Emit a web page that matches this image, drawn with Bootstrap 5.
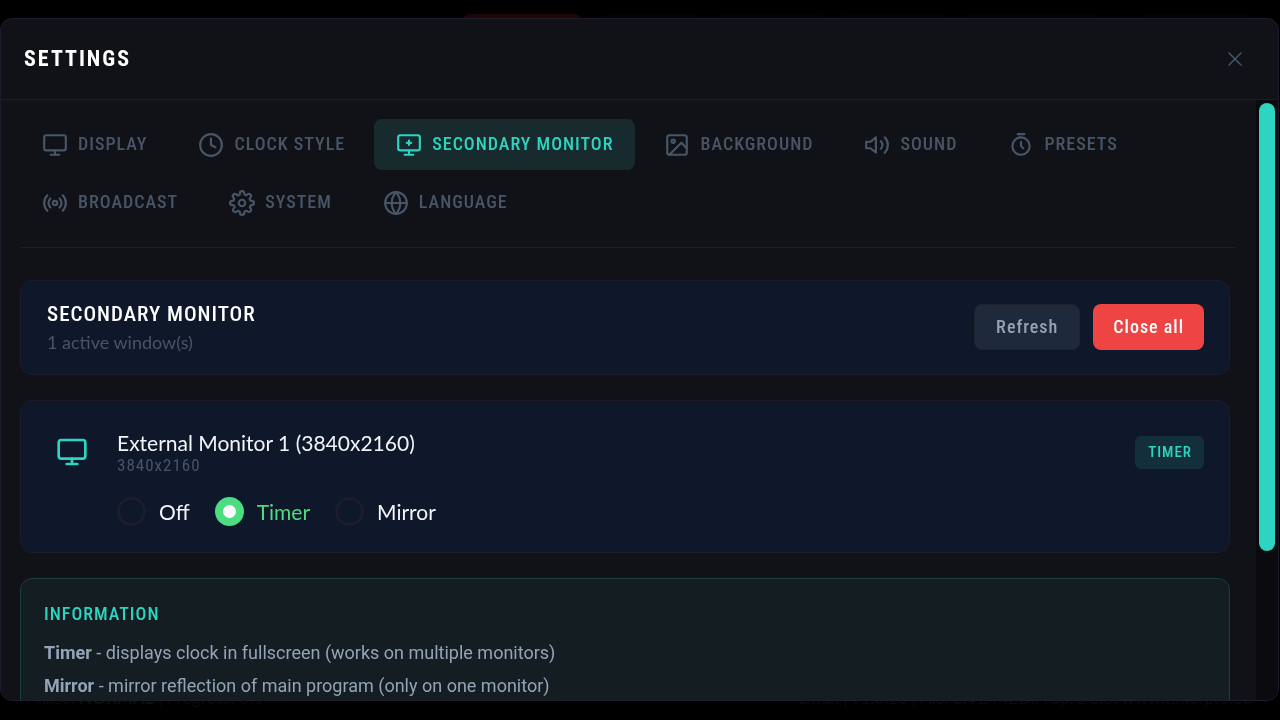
<!DOCTYPE html>
<html lang="en" data-bs-theme="dark">
<head>
<meta charset="utf-8">
<meta name="viewport" content="width=device-width, initial-scale=1">
<title>Settings</title>
<link href="https://cdn.jsdelivr.net/npm/bootstrap@5.3.0/dist/css/bootstrap.min.css" rel="stylesheet">
<style>
  :root {
    --teal: #2dd4bf;
    --muted: #475569;
    --line: #1e1b2b;
    --cond: "Roboto Condensed", "Liberation Sans Narrow", sans-serif;
  }
  body { background: #000; font-family: Lato, "Liberation Sans", sans-serif; color: #f1f5f9; }
  svg { fill: none; stroke: currentColor; stroke-width: 2; stroke-linecap: round; stroke-linejoin: round; flex: none; }

  /* dimmed application behind the dialog */
  .app { height: 100vh; overflow: hidden; padding: 14px 28px 10px 26px; font-size: 17px; line-height: 24px; color: #0a0b0c; }
  .app-tools { gap: 13px; }
  .app-tool { height: 46px; width: 112px; border-radius: 8px; background: #030306; }
  .app-tool.stop { width: 120px; background: #1d0707; margin-right: 5px; }
  .app-tool.slim { width: 100px; }
  .app-tool.wide { width: 140px; margin-right: 24px; }
  .app-phase { color: #04150b; }

  /* dialog */
  .settings-layer { padding-top: 18px; }
  .settings-dialog { height: calc(95vh - 1px); margin-right: 1px; background: #111217; border: 1px solid var(--line); border-radius: 12px; overflow: hidden; }
  .settings-head { height: 81px; padding: 0 23px; border-bottom: 1px solid var(--line); }
  .settings-title { font: 700 22px/28px var(--cond); letter-spacing: 2px; }
  .close-x { width: 40px; height: 40px; color: var(--muted); background: none; border: 0; }
  .close-x svg { stroke-width: 1.5; }
  .settings-body { min-height: 0; }
  .settings-scroll { overflow: hidden; padding: 19px 19px 0; }

  .tabs-bar { gap: 7px; padding-bottom: 19px; border-bottom: 1px solid #1c1d26; margin-bottom: 32px; }
  .tab-btn { height: 51px; padding: 0 22px; gap: 10px; border: 0; border-radius: 8px; background: none; color: var(--muted); font: 500 18px/24px var(--cond); letter-spacing: 1px; white-space: nowrap; }
  .tab-btn span { padding-bottom: 2px; }
  .tab-btn.active { background: #172a2e; color: var(--teal); }
  .panel-list { gap: 25px; padding-right: 7px; }
  .panel-box { background: #0f172a; border: 1px solid var(--line); border-radius: 12px; padding: 0 25px 0 26px; }
  .panel-top { height: 95px; padding-bottom: 2px; }
  .panel-title { font: 500 21px/28px var(--cond); letter-spacing: 1px; margin-bottom: 2px; }
  .panel-sub { font-size: 18px; line-height: 24px; color: var(--muted); }
  .acts { gap: 13px; }
  .act { height: 46px; border-radius: 8px; font: 500 18px/24px var(--cond); letter-spacing: 1px; }
  .act-plain { padding: 0 21px; background: #1e293b; border: 1px solid #1f2330; color: #94a3b8; }
  .act-danger { padding: 0 20px; background: #ef4444; border: 0; color: #fff; }

  .screen-box { padding-top: 29px; padding-bottom: 26px; }
  .screen-icon { width: 50px; color: var(--teal); }
  .screen-head { gap: 20px; }
  .screen-name { font-size: 21px; line-height: 26px; }
  .screen-res { font: 400 17px/18px var(--cond); letter-spacing: 1px; color: var(--muted); }
  .tag { background: #132f3b; color: var(--teal); border-radius: 6px; margin: -6px 0; padding: 4px 12px 5px 13px; font: 500 15px/24px var(--cond); letter-spacing: 1px; }
  .mode-list { gap: 25px; padding-left: 70px; margin-top: 23px; }
  .mode { gap: 13px; font-size: 21px; line-height: 29px; }
  .mode input { appearance: none; width: 29px; height: 29px; margin: 0; border: 3px solid #1e1b2b; border-radius: 50%; background: transparent; }
  .mode input:checked { border: 8px solid #4ade80; background: #fff; }
  .mode input:checked + span { color: #4ade80; }

  .info-box { background: #141d22; border: 1px solid #17403f; border-radius: 12px; padding: 21px 23px; color: #94a3b8; font: 400 18px/33px Roboto, sans-serif; }
  .info-title { font: 500 18px/28px var(--cond); letter-spacing: 1px; color: var(--teal); margin-bottom: 8px; }

  .scroll-track { width: 22px; flex: none; padding: 3px; background: #0a0a0f; }
  .scroll-thumb { height: 75.5%; border-radius: 8px; background: var(--teal); width: 16px; }
</style>
</head>
<body>
<div class="app d-flex flex-column justify-content-between">
  <div class="app-tools d-flex justify-content-end" aria-hidden="true">
    <div class="app-tool stop"></div><div class="app-tool slim"></div><div class="app-tool"></div><div class="app-tool"></div><div class="app-tool wide"></div><div class="app-tool"></div>
  </div>
  <footer class="d-flex justify-content-between">
    <span>Phase: <b class="app-phase">NORMAL</b> | Progress: 0%</span>
    <span>Linux | v1.0.10 | A.S. LIVE MEDIA Sp. z o.o. www.timerpro.eu</span>
  </footer>
</div>

<div class="settings-layer position-fixed top-0 start-0 w-100 h-100">
  <section class="settings-dialog d-flex flex-column" role="dialog" aria-labelledby="dlg-title">
    <header class="settings-head d-flex align-items-center justify-content-between flex-shrink-0">
      <h1 class="settings-title mb-0" id="dlg-title">SETTINGS</h1>
      <button class="close-x d-flex align-items-center justify-content-center p-0" type="button" aria-label="Close">
        <svg width="24" height="24" viewBox="0 0 24 24"><path d="M6 6l12 12M18 6L6 18"/></svg>
      </button>
    </header>
    <div class="settings-body d-flex flex-grow-1">
      <div class="settings-scroll flex-grow-1">
        <nav class="tabs-bar d-flex flex-wrap">
          <button type="button" class="tab-btn d-flex align-items-center"><svg width="26" height="26" viewBox="0 0 24 24"><rect x="2" y="3" width="20" height="14" rx="2"/><path d="M8 21h8M12 17v4"/></svg><span>DISPLAY</span></button>
          <button type="button" class="tab-btn d-flex align-items-center"><svg width="26" height="26" viewBox="0 0 24 24"><circle cx="12" cy="12" r="10"/><path d="M12 6v6l4 2"/></svg><span>CLOCK STYLE</span></button>
          <button type="button" class="tab-btn active d-flex align-items-center"><svg width="26" height="26" viewBox="0 0 24 24"><rect x="2" y="3" width="20" height="14" rx="2"/><path d="M8 21h8M12 17v4M12 8v4M10 10h4"/></svg><span>SECONDARY MONITOR</span></button>
          <button type="button" class="tab-btn d-flex align-items-center"><svg width="26" height="26" viewBox="0 0 24 24"><rect x="3" y="3" width="18" height="18" rx="2"/><circle cx="8.500" cy="8.500" r="1.500"/><path d="M21 15l-5-5L5 21"/></svg><span>BACKGROUND</span></button>
          <button type="button" class="tab-btn d-flex align-items-center"><svg width="26" height="26" viewBox="0 0 24 24" stroke-linejoin="miter"><path d="M11 5L6 9H2v6h4l5 4zM15.540 8.460a5 5 0 0 1 0 7.070M19.070 4.930a10 10 0 0 1 0 14.140"/></svg><span>SOUND</span></button>
          <button type="button" class="tab-btn d-flex align-items-center"><svg width="26" height="26" viewBox="0 0 24 24"><circle cx="12" cy="13" r="8"/><path d="M12 9v4l2 2M9 2h6"/></svg><span>PRESETS</span></button>
          <button type="button" class="tab-btn d-flex align-items-center"><svg width="26" height="26" viewBox="0 0 24 24"><circle cx="12" cy="12" r="2"/><path d="M16.240 7.760a6 6 0 0 1 0 8.490M7.760 16.240a6 6 0 0 1 0-8.490M19.070 4.930a10 10 0 0 1 0 14.140M4.930 19.070a10 10 0 0 1 0-14.140"/></svg><span>BROADCAST</span></button>
          <button type="button" class="tab-btn d-flex align-items-center"><svg width="26" height="26" viewBox="0 0 24 24"><circle cx="12" cy="12" r="3"/><path d="M19.400 15a1.650 1.650 0 0 0 .33 1.820l.06.06a2 2 0 1 1-2.830 2.830l-.06-.06a1.650 1.650 0 0 0-2.800 1.170V21a2 2 0 0 1-4 0v-.09a1.650 1.650 0 0 0-2.900-1.080l-.06.06a2 2 0 1 1-2.830-2.830l.06-.06A1.650 1.650 0 0 0 3.090 14H3a2 2 0 0 1 0-4h.09a1.650 1.650 0 0 0 1.080-2.900l-.06-.06a2 2 0 1 1 2.830-2.830l.06.06A1.650 1.650 0 0 0 10 3.090V3a2 2 0 0 1 4 0v.09a1.650 1.650 0 0 0 2.900 1.080l.06-.06a2 2 0 1 1 2.830 2.830l-.06.06A1.650 1.650 0 0 0 20.910 10H21a2 2 0 0 1 0 4h-.09a1.650 1.650 0 0 0-1.510 1z"/></svg><span>SYSTEM</span></button>
          <button type="button" class="tab-btn d-flex align-items-center"><svg width="26" height="26" viewBox="0 0 24 24"><circle cx="12" cy="12" r="10"/><path d="M2 12h20M12 2a15.300 15.300 0 0 1 4 10 15.300 15.300 0 0 1-4 10 15.300 15.300 0 0 1-4-10 15.300 15.300 0 0 1 4-10z"/></svg><span>LANGUAGE</span></button>
        </nav>

        <div class="panel-list d-flex flex-column">
          <div class="panel-box panel-top d-flex align-items-center justify-content-between">
            <div>
              <h2 class="panel-title">SECONDARY MONITOR</h2>
              <p class="panel-sub mb-0">1 active window(s)</p>
            </div>
            <div class="acts d-flex">
              <button type="button" class="act act-plain">Refresh</button>
              <button type="button" class="act act-danger">Close all</button>
            </div>
          </div>

          <div class="panel-box screen-box">
            <div class="screen-head d-flex align-items-center">
              <div class="screen-icon d-flex justify-content-center"><svg width="32" height="32" viewBox="0 0 24 24"><rect x="2" y="3" width="20" height="14" rx="2"/><path d="M8 21h8M12 17v4"/></svg></div>
              <div class="flex-grow-1">
                <div class="screen-name">External Monitor 1 (3840x2160)</div>
                <div class="screen-res">3840x2160</div>
              </div>
              <span class="tag">TIMER</span>
            </div>
            <div class="mode-list d-flex">
              <label class="mode d-flex align-items-center"><input type="radio" name="mode"><span>Off</span></label>
              <label class="mode d-flex align-items-center"><input type="radio" name="mode" checked><span>Timer</span></label>
              <label class="mode d-flex align-items-center"><input type="radio" name="mode"><span>Mirror</span></label>
            </div>
          </div>

          <div class="info-box">
            <h3 class="info-title">INFORMATION</h3>
            <div><b>Timer</b> - displays clock in fullscreen (works on multiple monitors)</div>
            <div><b>Mirror</b> - mirror reflection of main program (only on one monitor)</div>
          </div>
        </div>
      </div>
      <div class="scroll-track"><div class="scroll-thumb"></div></div>
    </div>
  </section>
</div>
<script src="https://cdn.jsdelivr.net/npm/bootstrap@5.3.0/dist/js/bootstrap.bundle.min.js"></script>
</body>
</html>
